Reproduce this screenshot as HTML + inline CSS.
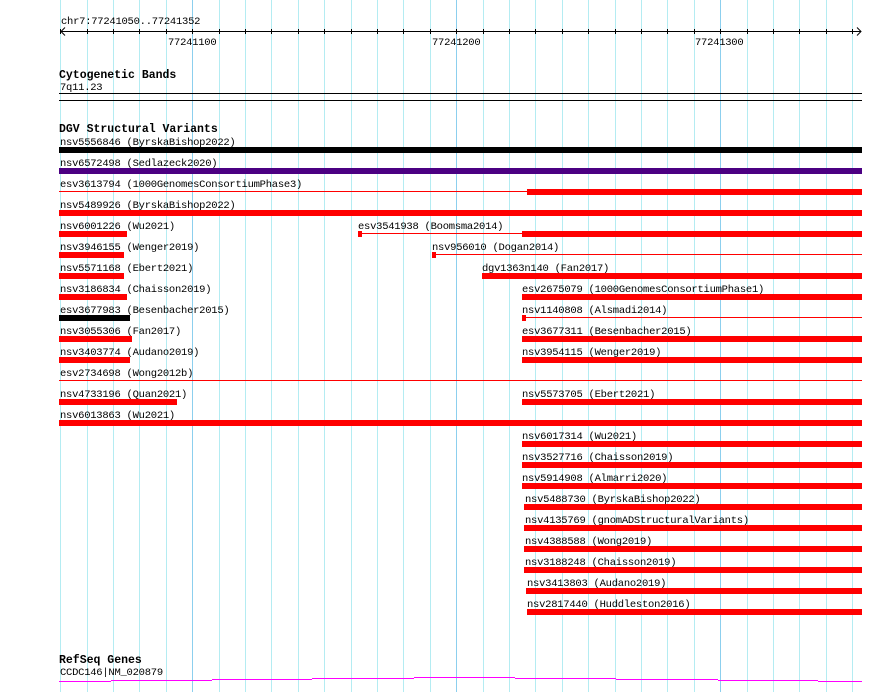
<!DOCTYPE html>
<html><head><meta charset="utf-8"><style>
html,body{margin:0;padding:0;background:#fff;width:890px;height:692px;overflow:hidden}
svg{display:block}
text{font-family:"Liberation Mono",monospace;font-size:10.5px;letter-spacing:-0.25px;fill:#000}
.t{font-weight:bold;font-size:11.5px;letter-spacing:0}
</style></head><body>
<svg width="890" height="692" viewBox="0 0 890 692" shape-rendering="crispEdges">
<g id="grid"></g>
<script>
(function(){
var ns="http://www.w3.org/2000/svg",g=document.getElementById("grid");
for(var k=0;k<=30;k++){var x=Math.floor(60.7+26.4*k)+0.5;var maj=(k==5||k==15||k==25);
var l=document.createElementNS(ns,"line");l.setAttribute("x1",x);l.setAttribute("x2",x);l.setAttribute("y1",0);l.setAttribute("y2",692);
l.setAttribute("stroke",maj?"#8ccfee":"#b4ecf2");l.setAttribute("stroke-width",1);g.appendChild(l);
var t=document.createElementNS(ns,"line");t.setAttribute("x1",x);t.setAttribute("x2",x);t.setAttribute("y1",29);t.setAttribute("y2",34);t.setAttribute("stroke","#000");g.appendChild(t);}
})();
</script>
<text x="61" y="24">chr7:77241050..77241352</text>
<line x1="61" y1="31.5" x2="861" y2="31.5" stroke="#000"/>
<polyline points="65,27.5 61,31.5 65,35.5" fill="none" stroke="#000" shape-rendering="auto"/>
<polyline points="857,27.5 861,31.5 857,35.5" fill="none" stroke="#000" shape-rendering="auto"/>
<text x="168" y="45">77241100</text>
<text x="432" y="45">77241200</text>
<text x="695" y="45">77241300</text>

<text class="t" x="59" y="78">Cytogenetic Bands</text>
<text x="60" y="90">7q11.23</text>
<rect x="59" y="93" width="803" height="1" fill="#000"/>
<rect x="59" y="100" width="803" height="1" fill="#000"/>

<text class="t" x="59" y="132">DGV Structural Variants</text>

<g>
<text x="60" y="145">nsv5556846 (ByrskaBishop2022)</text><rect x="59" y="147" width="803" height="6" fill="#000"/>
<text x="60" y="166">nsv6572498 (Sedlazeck2020)</text><rect x="59" y="168" width="803" height="6" fill="#4b0082"/>
<text x="60" y="187">esv3613794 (1000GenomesConsortiumPhase3)</text><rect x="59" y="191" width="468" height="1" fill="red"/><rect x="527" y="189" width="335" height="6" fill="red"/>
<text x="60" y="208">nsv5489926 (ByrskaBishop2022)</text><rect x="59" y="210" width="803" height="6" fill="red"/>

<text x="60" y="229">nsv6001226 (Wu2021)</text><rect x="59" y="231" width="68" height="6" fill="red"/>
<text x="358" y="229">esv3541938 (Boomsma2014)</text><rect x="358" y="231" width="4" height="6" fill="red"/><rect x="362" y="233" width="160" height="1" fill="red"/><rect x="522" y="231" width="340" height="6" fill="red"/>

<text x="60" y="250">nsv3946155 (Wenger2019)</text><rect x="59" y="252" width="65" height="6" fill="red"/>
<text x="432" y="250">nsv956010 (Dogan2014)</text><rect x="432" y="252" width="4" height="6" fill="red"/><rect x="436" y="254" width="426" height="1" fill="red"/>

<text x="60" y="271">nsv5571168 (Ebert2021)</text><rect x="59" y="273" width="65" height="6" fill="red"/>
<text x="482" y="271">dgv1363n140 (Fan2017)</text><rect x="482" y="273" width="380" height="6" fill="red"/>

<text x="60" y="292">nsv3186834 (Chaisson2019)</text><rect x="59" y="294" width="68" height="6" fill="red"/>
<text x="522" y="292">esv2675079 (1000GenomesConsortiumPhase1)</text><rect x="522" y="294" width="340" height="6" fill="red"/>

<text x="60" y="313">esv3677983 (Besenbacher2015)</text><rect x="59" y="315" width="71" height="6" fill="#000"/>
<text x="522" y="313">nsv1140808 (Alsmadi2014)</text><rect x="522" y="315" width="4" height="6" fill="red"/><rect x="526" y="317" width="336" height="1" fill="red"/>

<text x="60" y="334">nsv3055306 (Fan2017)</text><rect x="59" y="336" width="73" height="6" fill="red"/>
<text x="522" y="334">esv3677311 (Besenbacher2015)</text><rect x="522" y="336" width="340" height="6" fill="red"/>

<text x="60" y="355">nsv3403774 (Audano2019)</text><rect x="59" y="357" width="71" height="6" fill="red"/>
<text x="522" y="355">nsv3954115 (Wenger2019)</text><rect x="522" y="357" width="340" height="6" fill="red"/>

<text x="60" y="376">esv2734698 (Wong2012b)</text><rect x="59" y="380" width="803" height="1" fill="red"/>

<text x="60" y="397">nsv4733196 (Quan2021)</text><rect x="59" y="399" width="118" height="6" fill="red"/>
<text x="522" y="397">nsv5573705 (Ebert2021)</text><rect x="522" y="399" width="340" height="6" fill="red"/>

<text x="60" y="418">nsv6013863 (Wu2021)</text><rect x="59" y="420" width="803" height="6" fill="red"/>

<text x="522" y="439">nsv6017314 (Wu2021)</text><rect x="522" y="441" width="340" height="6" fill="red"/>
<text x="522" y="460">nsv3527716 (Chaisson2019)</text><rect x="522" y="462" width="340" height="6" fill="red"/>
<text x="522" y="481">nsv5914908 (Almarri2020)</text><rect x="522" y="483" width="340" height="6" fill="red"/>
<text x="525" y="502">nsv5488730 (ByrskaBishop2022)</text><rect x="524" y="504" width="338" height="6" fill="red"/>
<text x="525" y="523">nsv4135769 (gnomADStructuralVariants)</text><rect x="524" y="525" width="338" height="6" fill="red"/>
<text x="525" y="544">nsv4388588 (Wong2019)</text><rect x="524" y="546" width="338" height="6" fill="red"/>
<text x="525" y="565">nsv3188248 (Chaisson2019)</text><rect x="524" y="567" width="338" height="6" fill="red"/>
<text x="527" y="586">nsv3413803 (Audano2019)</text><rect x="526" y="588" width="336" height="6" fill="red"/>
<text x="527" y="607">nsv2817440 (Huddleston2016)</text><rect x="527" y="609" width="335" height="6" fill="red"/>
</g>

<text class="t" x="59" y="663">RefSeq Genes</text>
<text x="60" y="675">CCDC146|NM_020879</text>
<g fill="#f0f">
<rect x="59" y="681" width="52" height="1"/>
<rect x="111" y="680" width="101" height="1"/>
<rect x="212" y="679" width="100" height="1"/>
<rect x="312" y="678" width="102" height="1"/>
<rect x="414" y="677" width="101" height="1"/>
<rect x="515" y="678" width="101" height="1"/>
<rect x="616" y="679" width="102" height="1"/>
<rect x="718" y="680" width="100" height="1"/>
<rect x="818" y="681" width="44" height="1"/>
</g>
</svg>
</body></html>
